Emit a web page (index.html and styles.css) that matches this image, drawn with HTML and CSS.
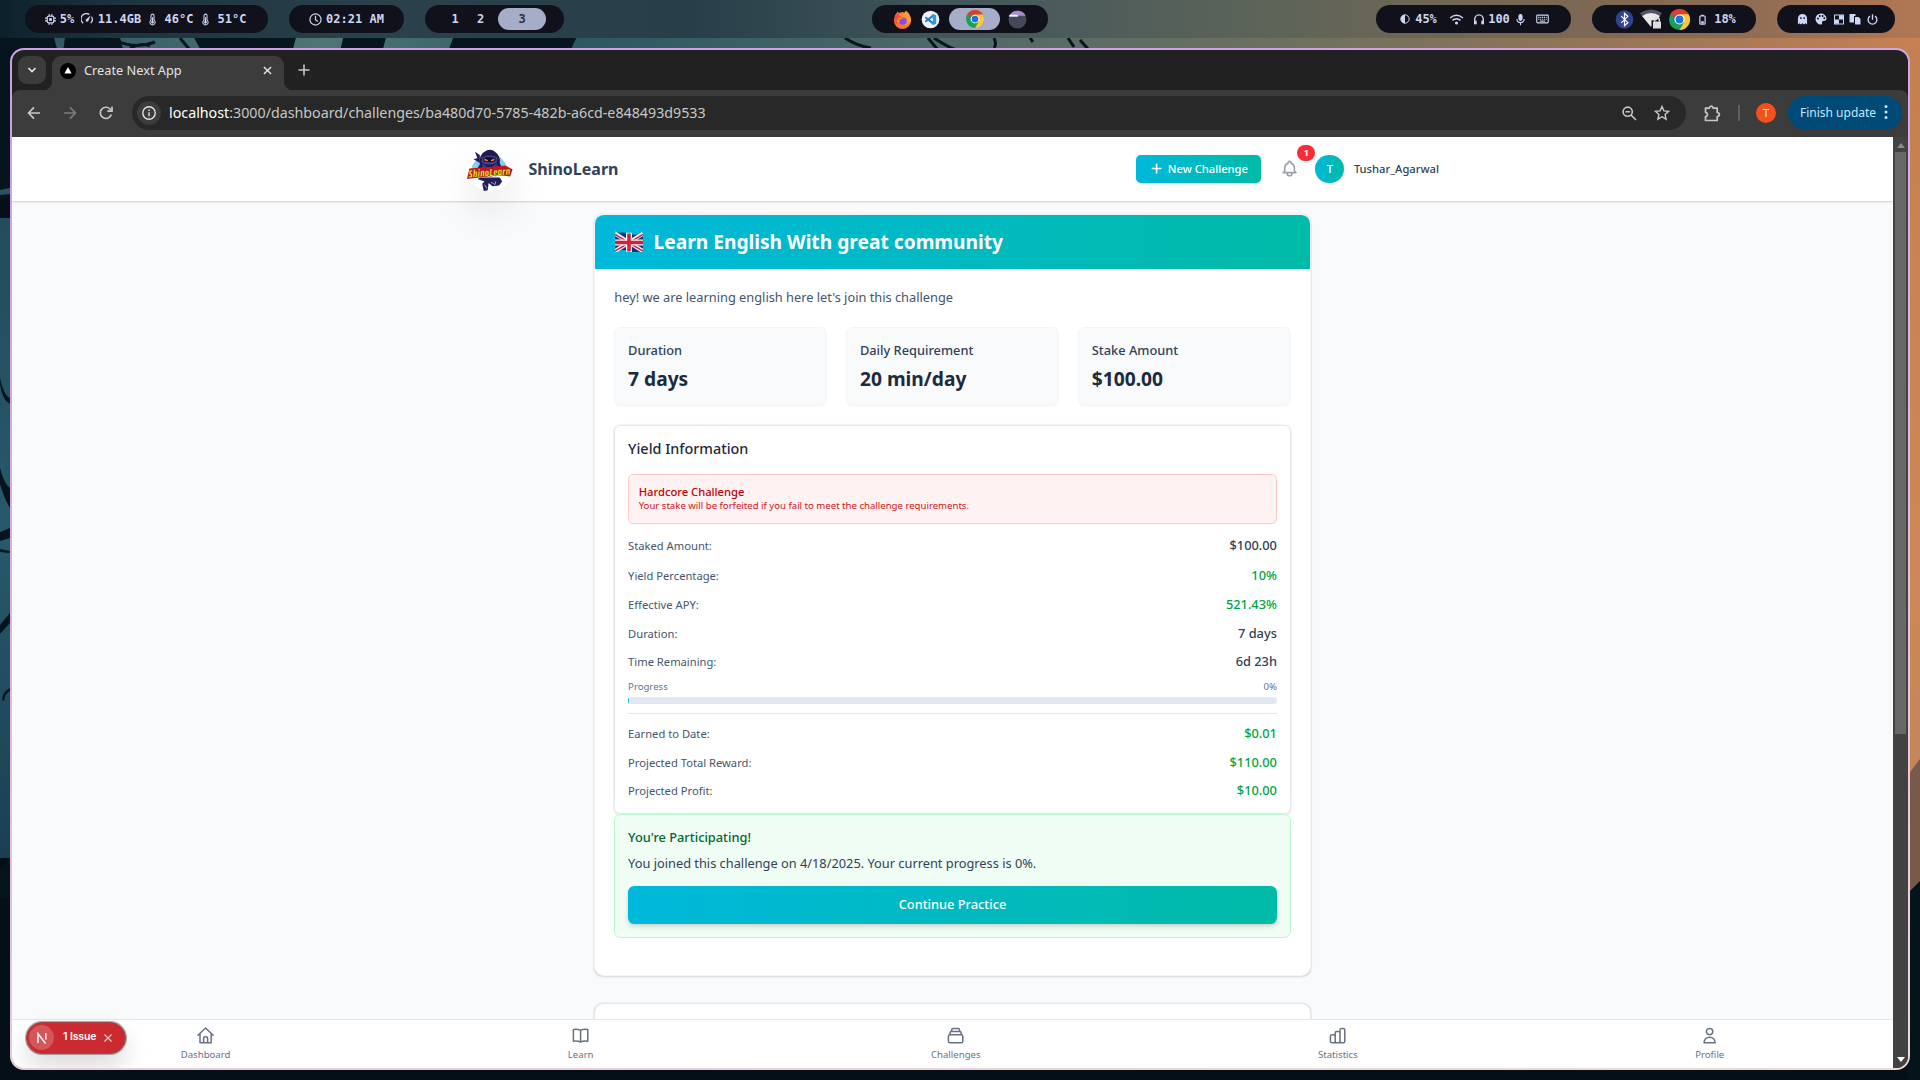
FILE: index.html
```html
<!DOCTYPE html>
<html lang="en">
<head>
<meta charset="utf-8">
<title>Create Next App</title>
<link rel="stylesheet" href="styles.css">
</head>
<body>
<svg class="defs" width="0" height="0" aria-hidden="true">
  <symbol id="chrome" viewBox="0 0 24 24">
    <circle cx="12" cy="12" r="12" fill="#1e9e53"/>
    <path d="M12 12 1.6 6A12 12 0 0 1 22.4 6Z" fill="#e33b2e"/>
    <path d="M12 6h10.4A12 12 0 0 1 12 24l5.2-9Z" fill="#fcc934"/>
    <path d="M1.6 6 6.8 15 12 6Z" fill="#1e9e53"/>
    <path d="M1.6 6 6.8 9 12 6Z" fill="#e33b2e"/>
    <circle cx="12" cy="12" r="5.8" fill="#fff"/>
    <circle cx="12" cy="12" r="4.5" fill="#1a73e8"/>
  </symbol>
  <symbol id="thermo" viewBox="0 0 12 16">
    <path d="M4 2.8a2 2 0 0 1 4 0v6a3.5 3.5 0 1 1-4 0Z" fill="none" stroke="#cdd6f4" stroke-width="1.4"/>
    <path d="M6 5v7" stroke="#cdd6f4" stroke-width="1.6"/><circle cx="6" cy="11.8" r="1.8" fill="#cdd6f4"/>
  </symbol>
</svg>

<svg class="wallpaper" viewBox="0 0 1920 1080" width="1920" height="1080" aria-hidden="true">
  <defs>
    <linearGradient id="sky" x1="0" x2="1"><stop offset="0" stop-color="#2a5361"/><stop offset=".17" stop-color="#4f7674"/><stop offset=".3" stop-color="#2c5763"/><stop offset=".5" stop-color="#506a68"/><stop offset=".72" stop-color="#77725c"/><stop offset=".85" stop-color="#9a7656"/><stop offset="1" stop-color="#c78153"/></linearGradient>
    <linearGradient id="leftSky" x1="0" x2="0" y1="0" y2="1"><stop offset="0" stop-color="#244c5a"/><stop offset=".5" stop-color="#28596a"/><stop offset="1" stop-color="#1b3f50"/></linearGradient>
    <linearGradient id="rightSky" x1="0" x2="0" y1="0" y2="1"><stop offset="0" stop-color="#c47f52"/><stop offset=".6" stop-color="#cf8757"/><stop offset="1" stop-color="#b98560"/></linearGradient>
  </defs>
  <rect width="1920" height="1080" fill="#040f17"/>
  <rect width="1920" height="60" fill="url(#sky)"/>
  <path d="M0 30H52L60 60H0ZM66 30H118L126 60H62ZM190 30H298L290 60H206ZM345 30H388L380 60H338ZM456 30H580L566 60H445Z" fill="#07161e"/>
  <path d="M115 40q20 10 40 2M130 48q12-6 20-2M180 38l10 12M845 38q12 8 26 10M928 38l10 12M934 38q12 8 22 12M994 38q3 6 0 10M1030 38l3 4M1068 38l6 9M1080 40l8 9" fill="none" stroke="#07161e" stroke-width="3"/>
  <path d="M0 48h10v152H0Z" fill="#06151d"/>
  <rect y="218" width="10" height="640" fill="url(#leftSky)"/>
  <path d="M0 190l10-2v6l-10 1Z" fill="#2a5361"/>
  <path d="M0 378q4 18 10 20v6Q2 400 0 384ZM0 468q4 16 10 20v20Q4 498 0 484ZM0 532l10-4v10l-10 3ZM0 549l10 2v2l-10-1ZM0 625l10-12v10L0 634ZM2 700q1-9 8-12v3q-5 2-6 10ZM0 870l10-12v40H0Z" fill="#06151d"/>
  <rect x="1908" y="48" width="12" height="880" fill="url(#rightSky)"/>
  <path d="M1908 775l12-16v150h-12Z" fill="#79594a"/>
  <path d="M1908 893l12-12v199h-12Z" fill="#05131b"/>
</svg>

<div class="desktop">
  <header class="bar">
    <div class="bar-group">
      <div class="pill stats">
        <svg viewBox="0 0 16 16" width="11" height="11"><rect x="3.2" y="3.2" width="9.6" height="9.6" rx="2.4" fill="none" stroke="#cdd6f4" stroke-width="1.8"/><rect x="6" y="6" width="4" height="4" fill="#cdd6f4"/><path d="M6 0v3M10 0v3M6 13v3M10 13v3M0 6h3M0 10h3M13 6h3M13 10h3" stroke="#cdd6f4" stroke-width="1.5"/></svg>
        <span>5%</span>
        <svg viewBox="0 0 16 16" width="12" height="12"><path d="M3 13.5A6.8 6.8 0 0 1 11 2M14 5a6.8 6.8 0 0 1-1 8.5" fill="none" stroke="#cdd6f4" stroke-width="1.7"/><path d="M13 3 9.6 11A2 2 0 0 1 6.3 9Z" fill="#cdd6f4"/></svg>
        <span>11.4GB</span>
        <svg width="9" height="13"><use href="#thermo"/></svg>
        <span>46°C</span>
        <svg width="9" height="13"><use href="#thermo"/></svg>
        <span>51°C</span>
      </div>
      <div class="pill clock">
        <svg viewBox="0 0 14 14" width="13" height="13" fill="none" stroke="#cdd6f4" stroke-width="1.3"><circle cx="7" cy="7" r="6"/><path d="M7 3v4.2l2.6 2"/></svg>
        <span>02:21 AM</span>
      </div>
      <div class="pill spaces"><span>1</span><span>2</span><span class="on">3</span></div>
    </div>
    <div class="pill apps">
      <svg viewBox="0 0 20 20" width="19" height="19"><circle cx="10" cy="11" r="9" fill="#ff7139"/><path d="M2 6 5 1.5 7 5l5-1.500L13.500.5Q19.500 5 19 12L14 16 4 12Z" fill="#ff9a2e"/><path d="M2 6 5 2l2 4 3 2-6 3 1 5Q0 12 2 6Z" fill="#f2503f"/><circle cx="10.500" cy="11.500" r="4" fill="#8a4be8"/><path d="M5 8q4-1 6 1-3 0-4 2Z" fill="#ff8a2e"/></svg>
      <svg viewBox="0 0 20 20" width="19" height="19"><circle cx="10" cy="10" r="9.300" fill="#f1f2f6"/><path d="M13 4.200v11.600L4 8.300l1.200-1.400 7.800 6V7.100l-7.800 6L4 11.700Z" fill="#1f7fc9"/><path d="M12.400 4 16 5.600v8.800L12.400 16Z" fill="#2d9be8"/></svg>
      <span class="on"><svg width="18" height="18"><use href="#chrome"/></svg></span>
      <svg viewBox="0 0 20 20" width="19" height="19"><circle cx="10" cy="10" r="9.500" fill="#45475a"/><path d="M1.500 6A9.500 9.500 0 0 1 18.500 6Z" fill="#a98bd6"/><path d="M1.300 6h9" stroke="#fff" stroke-width="2"/></svg>
    </div>
    <div class="bar-group end">
      <div class="pill audio">
        <svg viewBox="0 0 12 12" width="10" height="10"><circle cx="6" cy="6" r="5" fill="none" stroke="#cdd6f4" stroke-width="1.200"/><path d="M6 1a5 5 0 0 0 0 10Z" fill="#cdd6f4"/></svg>
        <span>45%</span>
        <svg viewBox="0 0 16 12" width="15" height="11" fill="none" stroke="#cdd6f4" stroke-width="1.600"><path d="M1 4.300Q8-1.500 15 4.300M3.600 7Q8 3.200 12.400 7"/><circle cx="8" cy="9.800" r=".9" fill="#cdd6f4"/></svg>
        <svg viewBox="0 0 14 14" width="12" height="12" fill="none" stroke="#cdd6f4" stroke-width="1.700"><path d="M2 13V7.500a5 5.300 0 0 1 10 0V13"/><path d="M3 9v4M11 9v4" stroke-width="2.600"/></svg>
        <span>100</span>
        <svg viewBox="0 0 10 14" width="9" height="13" fill="none" stroke="#cdd6f4" stroke-width="1.200"><rect x="3.300" y="1.500" width="3.400" height="6.500" rx="1.700" fill="#cdd6f4"/><path d="M1 6.500q0 4 4 4t4-4M5 10.500v3"/></svg>
        <svg viewBox="0 0 14 10" width="13" height="10" fill="none" stroke="#cdd6f4" stroke-width="1.200"><rect x=".8" y=".8" width="12.400" height="8.400" rx="1"/><path d="M2.500 3.200h9M2.500 5.200h9" stroke-dasharray="1.200 .8"/><path d="M4 7.300h6"/></svg>
      </div>
      <div class="pill tray">
        <svg viewBox="0 0 20 20" width="19" height="19"><ellipse cx="10" cy="10" rx="9.300" ry="9.800" fill="#2f4391"/><path d="m6.500 6.500 7 6.800L10 16.500v-13l3.500 3.200-7 6.800" fill="none" stroke="#fff" stroke-width="1.300"/></svg>
        <svg viewBox="0 0 22 20" width="22" height="20"><path d="M0 4Q11-3 22 4l-2 3Q11 2 2 7Z" fill="#55555d"/><path d="M2 7q9-6 18 0l-9 11Z" fill="#e8e8e8"/><path d="M11.500 11.300h10.500V20H11.500Z" fill="#11111b"/><path d="M13 12.500h8v7h-8Z" fill="#dedede"/><path d="M14.700 12.500v-1.500a2.300 2.300 0 0 1 4.600 0v1.500" fill="none" stroke="#dedede" stroke-width="1.500"/></svg>
        <svg width="21" height="21"><use href="#chrome"/></svg>
        <svg viewBox="0 0 8 12" width="7" height="11"><rect x="1" y="2" width="6" height="9.300" rx=".8" fill="none" stroke="#cdd6f4" stroke-width="1.400"/><path d="M2.500.6h3V2h-3ZM2.500 8h3v2.500h-3Z" fill="#cdd6f4"/></svg>
        <span>18%</span>
      </div>
      <div class="pill power">
        <svg viewBox="0 0 12 12" width="11" height="12"><path d="M1 12V5.500a5 5 0 0 1 10 0V12L9.300 10.500 7.700 12 6 10.500 4.300 12 2.700 10.500Z" fill="#cdd6f4"/><circle cx="4.200" cy="5" r="1" fill="#11111b"/><circle cx="7.800" cy="5" r="1" fill="#11111b"/></svg>
        <svg viewBox="0 0 12 12" width="12" height="12"><path d="M6 .5a5.500 5.500 0 0 0 0 11c2 0 .6-2 1.200-3 .8-1.300 4.300.3 4.300-3A5.500 5.500 0 0 0 6 .5Z" fill="#cdd6f4"/><circle cx="3" cy="5.500" r=".9"/><circle cx="4.800" cy="3" r=".9"/><circle cx="7.600" cy="3" r=".9"/><circle cx="9.300" cy="5.200" r=".9"/></svg>
        <svg viewBox="0 0 12 12" width="10" height="11"><rect x=".6" y=".6" width="10.800" height="10.800" fill="none" stroke="#cdd6f4" stroke-width="1.200"/><path d="M1 6h5V1h5v5H6v5H1Z" fill="#cdd6f4"/></svg>
        <svg viewBox="0 0 12 12" width="12" height="12"><path d="M.5 1h6v2H5v6.500H.5Z" fill="#cdd6f4"/><path d="M6 4h3.500L11.500 6v5.500H6Z" fill="#cdd6f4"/></svg>
        <svg viewBox="0 0 12 12" width="11" height="11" fill="none" stroke="#cdd6f4" stroke-width="1.500"><path d="M3.300 2.300a4.800 4.800 0 1 0 5.400 0M6 .2v6"/></svg>
      </div>
    </div>
  </header>

  <div class="window">
    <div class="window-body">
      <div class="tabs">
        <div class="tab-search"><svg viewBox="0 0 10 10" width="10" height="10" fill="none" stroke="#e3e3e3" stroke-width="1.700"><path d="m1.500 3 3.500 3.600L8.500 3"/></svg></div>
        <div class="tab">
          <svg viewBox="0 0 16 16" width="16" height="16"><circle cx="8" cy="8" r="8" fill="#000"/><path d="M8 4l3.600 6.600H4.400Z" fill="#fff"/></svg>
          <span>Create Next App</span>
          <svg viewBox="0 0 10 10" width="9" height="9" stroke="#e3e3e3" stroke-width="1.600"><path d="M1 1l8 8M9 1 1 9"/></svg>
        </div>
        <svg class="new-tab" viewBox="0 0 12 12" width="12" height="12" stroke="#c7c7c7" stroke-width="1.600"><path d="M6 .5v11M.5 6h11"/></svg>
      </div>
      <div class="toolbar">
        <div class="nav-buttons">
          <svg viewBox="0 0 14 14" width="14" height="14" fill="none" stroke="#c7c7c7" stroke-width="1.700"><path d="M13 7H2M7 1.300 1.500 7 7 12.700"/></svg>
          <svg viewBox="0 0 14 14" width="14" height="14" fill="none" stroke="#7c7c7c" stroke-width="1.700"><path d="M1 7h11M7 1.300 12.500 7 7 12.700"/></svg>
          <svg viewBox="0 0 14 14" width="14" height="14" fill="none" stroke="#c7c7c7" stroke-width="1.700"><path d="M12.300 8.500A5.600 5.600 0 1 1 11 3l1.500 1.500"/><path d="M13 .5v4.700H8.300" /></svg>
        </div>
        <div class="omnibox">
          <span class="info"><svg viewBox="0 0 14 14" width="14" height="14" fill="none" stroke="#e3e3e3" stroke-width="1.400"><circle cx="7" cy="7" r="6.200"/><path d="M7 6.300v4M7 3.500v1.400"/></svg></span>
          <span class="url"><b>localhost</b>:3000/dashboard/challenges/ba480d70-5785-482b-a6cd-e848493d9533</span>
          <svg viewBox="0 0 15 15" width="15" height="15" fill="none" stroke="#c7c7c7" stroke-width="1.600"><circle cx="5.700" cy="5.700" r="4.600"/><path d="m9 9 5 5M3.500 5.700h4.400"/></svg>
          <svg viewBox="0 0 16 16" width="16" height="16" fill="none" stroke="#c7c7c7" stroke-width="1.400"><path d="m8 1.500 1.900 4.400 4.800.4-3.600 3.200 1 4.700L8 11.700l-4.100 2.500 1-4.700L1.300 6.300l4.800-.4Z"/></svg>
        </div>
        <div class="tools">
          <svg viewBox="0 0 17 17" width="17" height="17" fill="none" stroke="#c7c7c7" stroke-width="1.700"><path d="M1.500 3.200h3.900q.3-2 1.900-2t1.900 2h4V7.500q2.200.3 2.200 2t-2.200 2v4H1.500v-3.800q2-.4 2-2.200t-2-2.200Z" stroke-linejoin="round"/></svg>
          <i class="sep"></i>
          <span class="profile">T</span>
          <span class="update">Finish update<svg viewBox="0 0 4 16" width="4" height="16" fill="#c2e7ff"><circle cx="2" cy="2.500" r="1.500"/><circle cx="2" cy="8" r="1.500"/><circle cx="2" cy="13.500" r="1.500"/></svg></span>
        </div>
      </div>

      <div class="viewport">
        <div class="page">
          <div class="site-header">
            <div class="container">
              <div class="logo">
                <svg viewBox="0 0 56 56" width="56" height="56">
                  <path d="M5 29Q8 14 22 9l20 4q8 8 9 16Z" fill="#5bc3dc" opacity=".75"/>
                  <path d="M16 10 10 6l3 8-5 1 8 5Z" fill="#251b5a"/>
                  <path d="M16 22Q14 9 25 4q6-2 10 2 7 5 6 14l4 10H11Z" fill="#201a50"/>
                  <path d="M18 13q11-5 20 0l-1 7q-9 4-18 0Z" fill="#4a3d92"/>
                  <path d="M20 14q8-3 16 0l-1 4q-7 2-14 0Z" fill="#13112f"/>
                  <path d="M22 15l4 2h-3ZM34 15l-4 2h3Z" fill="#ff8b2b" stroke="#ff8b2b"/>
                  <path d="M20 20l8 8 9-8 3 10H17Z" fill="#2f3f83"/>
                  <path d="M17 38h24l3 5-4 5-8 1-5-4-1 9-5 1-2-9 3-3-9-3Z" fill="#231c55"/>
                  <path d="m30 44 5 3 1-4M22 47l3 5" stroke="#9aa7e0" stroke-width="1.200" fill="none"/>
                  <path d="M0 40 3 27 48 23 57 28 54 37 40 35Z" fill="#c5142c"/>
                  <text x="2" y="36.500" transform="rotate(-4 28 33)" textLength="52" lengthAdjust="spacingAndGlyphs" class="logo-word">ShinoLearn</text>
                </svg>
              </div>
              <span class="brand">ShinoLearn</span>
              <div class="actions">
                <div class="new-btn"><svg viewBox="0 0 16 16" width="14" height="14" stroke="#fff" stroke-width="2.200"><path d="M8 1v14M1 8h14"/></svg>New Challenge</div>
                <div class="bell">
                  <svg viewBox="0 0 24 24" width="24" height="24" fill="none" stroke="#99a1af" stroke-width="2" stroke-linejoin="round" stroke-linecap="round"><path d="M15 17h5l-1.400-1.400A2 2 0 0 1 18 14.200V11a6 6 0 0 0-4-5.700V5a2 2 0 1 0-4 0v.3C7.700 6.200 6 8.400 6 11v3.200a2 2 0 0 1-.6 1.400L4 17h5m6 0v1a3 3 0 1 1-6 0v-1m6 0H9"/></svg>
                  <span class="badge">1</span>
                </div>
                <span class="avatar">T</span>
                <span class="user">Tushar_Agarwal</span>
              </div>
            </div>
          </div>

          <div class="main">
            <div class="card">
              <div class="card-head">
                <svg class="flag" viewBox="0 0 35 26" width="35" height="26">
                  <path d="M0 2Q9-1 17.500 2T35 2V24Q26 27 17.500 24T0 24Z" fill="#12357e"/>
                  <path d="m0 2 35 22M35 2 0 24" stroke="#f5f5f5" stroke-width="5"/>
                  <path d="m0 3 35 21M35 3 0 24" stroke="#d11f3e" stroke-width="1.800"/>
                  <path d="M17.500 1v24M0 13h35" stroke="#f5f5f5" stroke-width="7.500"/>
                  <path d="M17.500 2v22.500M0 13h35" stroke="#d11f3e" stroke-width="4.400"/>
                </svg>
                <h1>Learn English With great community</h1>
              </div>
              <div class="card-body">
                <p class="desc">hey! we are learning english here let's join this challenge</p>
                <div class="facts">
                  <div class="fact"><span>Duration</span><b>7 days</b></div>
                  <div class="fact"><span>Daily Requirement</span><b>20 min/day</b></div>
                  <div class="fact"><span>Stake Amount</span><b>$100.00</b></div>
                </div>
                <div class="yield">
                  <h2>Yield Information</h2>
                  <div class="warning"><b>Hardcore Challenge</b><span>Your stake will be forfeited if you fail to meet the challenge requirements.</span></div>
                  <div class="rows">
                    <div class="row first"><span>Staked Amount:</span><b>$100.00</b></div>
                    <div class="row"><span>Yield Percentage:</span><b class="good">10%</b></div>
                    <div class="row"><span>Effective APY:</span><b class="good">521.43%</b></div>
                    <div class="row"><span>Duration:</span><b>7 days</b></div>
                    <div class="row"><span>Time Remaining:</span><b>6d 23h</b></div>
                    <div class="progress">
                      <div class="progress-label"><span>Progress</span><span>0%</span></div>
                      <div class="track"><i style="width:0.150%"></i></div>
                    </div>
                    <div class="totals">
                      <div class="row"><span>Earned to Date:</span><b class="good">$0.01</b></div>
                      <div class="row"><span>Projected Total Reward:</span><b class="good">$110.00</b></div>
                      <div class="row"><span>Projected Profit:</span><b class="good">$10.00</b></div>
                    </div>
                  </div>
                </div>
                <div class="joined">
                  <h3>You're Participating!</h3>
                  <p>You joined this challenge on 4/18/2025. Your current progress is 0%.</p>
                  <div class="cta">Continue Practice</div>
                </div>
              </div>
            </div>
            <div class="card next"></div>
          </div>

          <div class="bottom-nav">
            <div class="item"><svg viewBox="0 0 24 24" width="24" height="24"><path d="m2.500 11.500 9.500-9 9.500 9M5 9.500V21h14V9.500M9.500 21v-5.500q0-2 2.500-2t2.500 2V21"/></svg><span>Dashboard</span></div>
            <div class="item"><svg viewBox="0 0 24 24" width="24" height="24"><path d="M12 5.500Q8 3.500 3 4.500V19q5-1 9 1 4-2 9-1V4.500q-5-1-9 1V20"/></svg><span>Learn</span></div>
            <div class="item"><svg viewBox="0 0 24 24" width="24" height="24"><path d="M19 11H5m14 0a2 2 0 0 1 2 2v6a2 2 0 0 1-2 2H5a2 2 0 0 1-2-2v-6a2 2 0 0 1 2-2m14 0V9a2 2 0 0 0-2-2M5 11V9a2 2 0 0 1 2-2m0 0V5a2 2 0 0 1 2-2h6a2 2 0 0 1 2 2v2M7 7h10"/></svg><span>Challenges</span></div>
            <div class="item"><svg viewBox="0 0 24 24" width="24" height="24"><path d="M9 19v-6a2 2 0 0 0-2-2H5a2 2 0 0 0-2 2v6a2 2 0 0 0 2 2h2a2 2 0 0 0 2-2Zm0 0V9a2 2 0 0 1 2-2h2a2 2 0 0 1 2 2v10m-6 0a2 2 0 0 0 2 2h2a2 2 0 0 0 2-2m0 0V5a2 2 0 0 1 2-2h2a2 2 0 0 1 2 2v14a2 2 0 0 1-2 2h-2a2 2 0 0 1-2-2Z"/></svg><span>Statistics</span></div>
            <div class="item"><svg viewBox="0 0 24 24" width="24" height="24"><path d="M16 7a4 4 0 1 1-8 0 4 4 0 0 1 8 0ZM12 14a7 7 0 0 0-7 7h14a7 7 0 0 0-7-7Z"/></svg><span>Profile</span></div>
          </div>
        </div>
        <div class="scrollbar">
          <svg viewBox="0 0 8 5" width="8" height="5"><path d="M0 5 4 0l4 5Z" fill="#8b8b8b"/></svg>
          <i></i>
          <svg viewBox="0 0 8 5" width="8" height="5"><path d="M0 0h8L4 5Z" fill="#fff"/></svg>
        </div>
        <div class="issue">
          <span class="n"><svg viewBox="0 0 12 12" width="12" height="12" fill="none" stroke="#fff" stroke-width="1.400"><path d="M2 11V1.500l7.500 10M9.800 1v6.500"/></svg></span>
          <b>1 Issue</b>
          <svg viewBox="0 0 8 8" width="8" height="8" stroke="#f3c9cb" stroke-width="1.200"><path d="m.5.5 7 7m0-7-7 7"/></svg>
        </div>
      </div>
    </div>
  </div>
</div>
</body>
</html>
```
FILE: styles.css
```css
* { box-sizing: border-box; margin: 0; padding: 0; }
html, body { width: 1920px; height: 1080px; overflow: hidden; background: #040f17; }
body { font-family: "Noto Sans", sans-serif; position: relative; }
svg { display: block; flex: none; }
.defs { position: absolute; }
.wallpaper { position: absolute; inset: 0; }
.desktop { position: relative; height: 1080px; display: flex; flex-direction: column; }

/* status bar */
.bar { height: 38px; padding: 5px 25px; display: grid; grid-template-columns: 1fr auto 1fr; align-items: center;
  background: linear-gradient(90deg, #0d212b 0, #1c343e 6%, #2b414b 20%, #283f49 36%, #43575b 50%, #5d6459 66%, #756754 78%, #8a6b55 90%, #b27753 100%); }
.bar-group { display: flex; gap: 21px; }
.bar-group.end { justify-content: flex-end; }
.pill { height: 28px; border-radius: 14px; background: #11111b; color: #cdd6f4; display: grid; align-items: center; justify-items: center;
  font: bold 12px/28px "DejaVu Sans Mono", monospace; white-space: pre; }
.stats { width: 243px; padding-left: 19px; grid-template-columns: 12px 20px 18px 45px 18px 34px 17px 34px; justify-content: start; column-gap: 1px; }
.clock { width: 115px; padding-left: 20px; grid-template-columns: 13px 66px; justify-content: start; }
.spaces { width: 139px; padding-left: 22px; grid-template-columns: 16px 35px 48px; justify-content: start; }
.on { height: 22px; line-height: 22px; border-radius: 11px; background: #a6adc8; color: #313244; width: 100%; display: grid; place-items: center; }
.apps { width: 176px; padding-left: 20px; grid-template-columns: 20px 37px 51px 35px; justify-content: start; }
.audio { width: 195px; padding-left: 23px; grid-template-columns: 11px 32px 28px 18px 22px 21px 22px; justify-content: start; }
.tray { width: 164px; padding-left: 22px; grid-template-columns: 20px 34px 23px 23px 22px; justify-content: start; }
.power { width: 118px; padding-left: 19px; grid-template-columns: 12px 26px 9px 23px 13px; justify-content: start; }

/* browser window */
.window { width: 1900px; height: 1022px; margin: 10px 0 0 10px; padding: 2px; border-radius: 14px;
  background: linear-gradient(170deg, #cba0ea 0, #d2a5e6 25%, #e6bfdc 60%, #f3d8d2 100%); }
.window-body { height: 1018px; border-radius: 12px; overflow: hidden; display: flex; flex-direction: column; background: #202120; }
.tabs { height: 40px; flex: none; display: flex; padding: 6px 0 0 6px; }
.tab-search { width: 28px; height: 28px; border-radius: 9px; background: #3c3c3c; display: grid; place-items: center; }
.tab { width: 232px; height: 34px; margin-left: 6px; padding: 0 12px 5px 8px; border-radius: 9px 9px 0 0; background: #3c3c3c; display: flex; align-items: center; gap: 8px; color: #e3e3e3; font-size: 12.750px; position: relative; }
.tab::before, .tab::after { content: ""; position: absolute; bottom: 0; width: 9px; height: 9px; }
.tab::before { left: -9px; background: radial-gradient(circle at 0 0, transparent 9px, #3c3c3c 9.500px); }
.tab::after { right: -9px; background: radial-gradient(circle at 100% 0, transparent 9px, #3c3c3c 9.500px); }
.tab span { flex: 1; padding-bottom: 2px; }
.new-tab { margin: 8px 0 0 14px; }
.toolbar { height: 47px; flex: none; padding: 0 6px 1px 15px; background: #3c3c3c; border-radius: 8px 8px 0 0; display: flex; align-items: center; }
.nav-buttons { display: flex; gap: 22px; width: 105px; }
.omnibox { width: 1554px; height: 34px; border-radius: 17px; background: #282828; display: flex; align-items: center; padding: 0 16px 0 5px; gap: 17px; }
.info { width: 24px; height: 24px; border-radius: 12px; background: #3c3c3c; display: grid; place-items: center; margin-right: -9px; }
.url { flex: 1; color: #c7c7c7; font-size: 14.250px; padding-bottom: 2px; white-space: nowrap; }
.url b { font-weight: 400; color: #fff; }
.tools { flex: 1; display: flex; align-items: center; justify-content: flex-end; }
.sep { width: 2px; height: 16px; margin: 0 16px 0 17px; background: #5f5f5f; }
.profile { width: 20px; height: 20px; border-radius: 50%; background: #f4511e; color: #fbe9e7; font-size: 11px; line-height: 20px; text-align: center; }
.update { width: 114px; height: 34px; margin-left: 12px; padding: 0 14px 2px 12px; border-radius: 17px; background: #004a77; color: #c2e7ff; font-size: 12px; display: flex; align-items: center; justify-content: space-between; white-space: nowrap; }
.viewport { flex: 1; min-height: 0; display: flex; position: relative; }
.scrollbar { width: 15px; background: #424242; display: flex; flex-direction: column; align-items: center; padding: 6px 0; justify-content: space-between; }
.scrollbar i { width: 11px; height: 582px; margin: 4px 0 auto; background: #686868; }

/* web page, shown at 80% browser zoom */
.page { zoom: 0.8; width: 2351.250px; height: 1163.750px; flex: none; background: #f8fafc; display: flex; flex-direction: column; overflow: hidden; }
.site-header { height: 80px; flex: none; background: #fff; box-shadow: 0 1px 3px rgba(0,0,0,.12), 0 1px 2px rgba(0,0,0,.12); position: relative; }
.container { width: 1280px; height: 80px; margin: 0 auto; padding: 0 32px; display: flex; align-items: center; }
.logo { width: 58px; height: 56px; margin-left: 1px; border-radius: 28px; box-shadow: 0 25px 50px -12px rgba(0,0,0,.25); }
.logo svg { overflow: visible; }
.logo-word { font: italic 900 13px "Noto Sans", sans-serif; fill: #ffe81f; stroke: #4a0d1c; stroke-width: .4px; }
.brand { margin-left: 19px; font-size: 20px; font-weight: 700; color: #314158; }
.actions { margin-left: auto; display: flex; align-items: center; font-size: 14px; font-weight: 500; color: #314158; }
.new-btn { width: 156px; height: 35px; padding-left: 2px; border-radius: 6px; background: linear-gradient(90deg, #00b8db, #00bba7); color: #fff; display: flex; align-items: center; justify-content: center; gap: 7px; box-shadow: 0 1px 2px rgba(0,0,0,.08); white-space: nowrap; }
.bell { width: 24px; margin-left: 24px; position: relative; }
.badge { position: absolute; left: 21px; top: -18px; width: 23px; height: 20px; border-radius: 10px; background: #fb2c36; color: #fff; font-size: 12px; font-weight: 700; line-height: 20px; text-align: center; }
.avatar { width: 36px; height: 36px; margin: 0 12px 0 20px; border-radius: 50%; background: linear-gradient(90deg, #00b8db, #00bba7); color: #fff; line-height: 36px; text-align: center; }
.main { flex: 1; min-height: 0; overflow: hidden; display: flex; flex-direction: column; align-items: center; padding-top: 16px; }
.card { width: 896px; flex: none; border: 1px solid #f1f5f9; border-radius: 12px; background: #fff; box-shadow: 0 1px 3px rgba(0,0,0,.12), 0 1px 2px -1px rgba(0,0,0,.12); overflow: hidden; }
.card.next { height: 120px; margin-top: 33px; border-color: #e2e8f0; }
.card-head { height: 68px; padding: 0 24px; display: flex; align-items: center; background: linear-gradient(90deg, #00b8db, #00bba7); color: #fff; }
.flag { margin-left: 1px; }
.card-head h1 { margin-left: 12px; padding-left: 1px; font-size: 24px; line-height: 32px; font-weight: 700; white-space: nowrap; }
.card-body { padding: 24px 24px 47px; font-size: 16px; line-height: 24px; color: #45556c; }
.facts { margin: 24px 0; display: grid; grid-template-columns: repeat(3, 1fr); gap: 24px; }
.fact { padding: 16px; border: 1px solid #f1f5f9; border-radius: 8px; background: #f8fafc; display: grid; gap: 8px; }
.fact span { font-weight: 500; color: #314158; }
.fact b { font-size: 24px; line-height: 32px; color: #1d293d; }
.yield { padding: 16px; border: 1px solid #e2e8f0; border-radius: 8px; box-shadow: 0 1px 3px rgba(0,0,0,.1), 0 1px 2px -1px rgba(0,0,0,.1); }
.yield h2 { font-size: 18px; line-height: 26px; font-weight: 500; color: #1d293d; }
.warning { margin: 18px 0 16px; padding: 12px; border: 1px solid #ffc9c9; border-radius: 6px; background: #fef2f2; display: grid; }
.warning b { font-size: 14px; line-height: 20px; font-weight: 500; color: #c10007; }
.warning span { font-size: 12px; line-height: 16px; color: #d3131b; }
.rows, .totals { display: grid; gap: 12px; }
.row { display: flex; justify-content: space-between; align-items: center; height: 24px; }
.row.first { height: 22px; margin-bottom: 3px; }
.row span { font-size: 14px; color: #45556c; }
.row b { font-weight: 500; color: #314158; }
.row .good { color: #00a63e; }
.progress-label { display: flex; justify-content: space-between; margin-bottom: 4px; font-size: 12px; line-height: 16px; color: #62748e; }
.track { height: 8px; border-radius: 4px; background: #e2e8f0; overflow: hidden; }
.track i { display: block; height: 100%; background: #00b8c8; }
.totals { padding-top: 12px; border-top: 1px solid #e2e8f0; }
.joined { padding: 16px; border: 1px solid #b9f8cf; border-radius: 8px; background: #f0fdf4; position: relative; }
.joined h3 { font-size: 16px; font-weight: 500; color: #016630; margin-bottom: 8px; }
.joined p { color: #314158; }
.cta { height: 48px; margin-top: 16px; border-radius: 8px; background: linear-gradient(90deg, #00b8db, #00bba7); color: #fff; font-weight: 500; line-height: 46px; text-align: center; box-shadow: 0 4px 6px -1px rgba(0,0,0,.12), 0 2px 4px -2px rgba(0,0,0,.12); }
.bottom-nav { height: 61.500px; flex: none; border-top: 1px solid #e2e8f0; background: #fff; display: flex; justify-content: space-around; position: relative; }
.item { display: flex; flex-direction: column; align-items: center; gap: 4px; padding-top: 8px; font-size: 12px; line-height: 16px; color: #6a7282; }
.item svg { width: 24px; height: 24px; fill: none; stroke: #6a7282; stroke-width: 1.900; stroke-linejoin: round; stroke-linecap: round; }

/* dev overlay */
.issue { position: absolute; left: 14px; top: 885px; width: 100px; height: 32px; border-radius: 16px; background: #ca2a30; border: 1px solid #a3484b; box-shadow: 0 0 0 1px rgba(90,90,90,.5), 0 12px 24px rgba(0,0,0,.15); display: flex; align-items: center; padding: 0 0 1px 2px; color: #fff; font-size: 11px; }
.issue .n { width: 25px; height: 25px; border-radius: 50%; background: #d4555a; display: grid; place-items: center; margin-right: 9px; }
.issue b { width: 35px; margin-right: 6px; padding-bottom: 2px; font: 600 10.500px "Inter", sans-serif; white-space: nowrap; letter-spacing: -.1px; }
```
